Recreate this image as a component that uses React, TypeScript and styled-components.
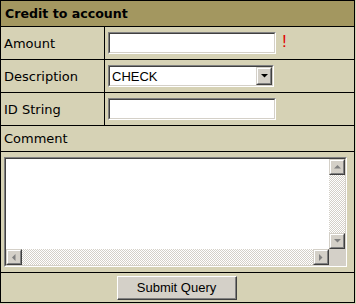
import * as React from "react";
import styled, { createGlobalStyle } from "styled-components";

const tan = "#d6d2b5";
const face = "#d4d0c8";

const GlobalStyle = createGlobalStyle`
  html, body {
    margin: 0;
    padding: 0;
    background: ${tan};
  }
  * {
    box-sizing: border-box;
  }
`;

const Panel = styled.form`
  width: 355px;
  height: 303px;
  border: 1px solid #000;
  background: ${tan};
  display: flex;
  flex-direction: column;
  font-family: "DejaVu Sans", Verdana, sans-serif;
  font-size: 13px;
  color: #000;
  margin: 0;
`;

const Header = styled.div`
  height: 26px;
  border-bottom: 1px solid #000;
  background: #a39760;
  display: flex;
  align-items: center;
  padding-left: 4px;
  font-weight: bold;
  font-size: 12.6px;
`;

const Row = styled.div<{ $height: number }>`
  display: grid;
  grid-template-columns: 104px 1fr;
  height: ${(p) => p.$height}px;
  border-bottom: 1px solid #000;
`;

const Label = styled.label`
  display: flex;
  align-items: center;
  padding-left: 3px;
  border-right: 1px solid #000;
`;

const Value = styled.div`
  display: flex;
  align-items: center;
  padding-left: 3px;
`;

const FullRow = styled.div<{ $height: number }>`
  height: ${(p) => p.$height}px;
  border-bottom: 1px solid #000;
  display: flex;
  align-items: center;
  padding-left: 3px;
`;

const AreaCell = styled.div`
  height: 121px;
  border-bottom: 1px solid #000;
  padding: 5px 0 0 3px;
`;

const ButtonRow = styled.div`
  flex: 1;
  display: flex;
  align-items: center;
  justify-content: center;
  padding-right: 2px;
`;

const InsetFrame = styled.div<{ $width: number; $height: number }>`
  border-style: solid;
  border-width: 1px;
  border-color: #808080 #fff #fff #808080;
  width: ${(p) => p.$width}px;
  height: ${(p) => p.$height}px;
  background: #fff;
`;

const InsetInner = styled.div`
  width: 100%;
  height: 100%;
  border-style: solid;
  border-width: 1px;
  border-color: #404040 ${face} ${face} #404040;
  display: flex;
  background: #fff;
`;

const TextInput = styled.input`
  border: 0;
  outline: none;
  width: 100%;
  height: 100%;
  padding: 0 2px;
  font-family: "Liberation Sans", Arial, sans-serif;
  font-size: 13px;
  background: #fff;
`;

const Required = styled.span`
  color: #e00000;
  font-family: "Liberation Sans", Arial, sans-serif;
  font-size: 17px;
  margin-left: 6px;
  margin-top: -3px;
`;

const NativeSelect = styled.select`
  appearance: none;
  border: 0;
  outline: none;
  flex: 1;
  min-width: 0;
  height: 100%;
  padding: 0 2px;
  font-family: "Liberation Sans", Arial, sans-serif;
  font-size: 13px;
  color: #000;
  background: #fff;
`;

const Raised = styled.div<{ $width: number; $height: number }>`
  width: ${(p) => p.$width}px;
  height: ${(p) => p.$height}px;
  flex: none;
  background: ${face};
  border-style: solid;
  border-width: 1px;
  border-color: ${face} #404040 #404040 ${face};
  display: flex;
`;

const RaisedInner = styled.div`
  flex: 1;
  border-style: solid;
  border-width: 1px;
  border-color: #fff #808080 #808080 #fff;
  display: flex;
  align-items: center;
  justify-content: center;
`;

const AreaGrid = styled.div`
  flex: 1;
  display: grid;
  grid-template-columns: 1fr 16px;
  grid-template-rows: 1fr 16px;
`;

const Area = styled.textarea`
  border: 0;
  outline: none;
  resize: none;
  overflow: hidden;
  padding: 2px;
  font-family: "Liberation Mono", "Courier New", monospace;
  font-size: 13px;
  background: #fff;
`;

const Track = styled.div<{ $vertical?: boolean }>`
  display: flex;
  flex-direction: ${(p) => (p.$vertical ? "column" : "row")};
  justify-content: space-between;
  background: repeating-conic-gradient(${face} 0 25%, #fff 0 50%) 0 0 / 2px 2px;
`;

const Corner = styled.div`
  background: ${face};
`;

const SubmitButton = styled.button`
  width: 120px;
  height: 24px;
  padding: 0;
  background: ${face};
  border-style: solid;
  border-width: 1px;
  border-color: #fff #404040 #404040 #fff;
  box-shadow: inset -1px -1px 0 #808080;
  font-family: "Liberation Sans", Arial, sans-serif;
  font-size: 13px;
  color: #000;
  cursor: pointer;
`;

type Dir = "up" | "down" | "left" | "right";

const arrowPoints: Record<Dir, string> = {
  up: "3.5,0 0,3.5 7,3.5",
  down: "0,0 7,0 3.5,3.5",
  left: "3.5,0 3.5,7 0,3.5",
  right: "0,0 0,7 3.5,3.5",
};

const Arrow: React.FC<{ dir: Dir; color?: string }> = ({ dir, color = "#808080" }) => {
  const vertical = dir === "up" || dir === "down";
  return (
    <svg width={vertical ? 7 : 4} height={vertical ? 4 : 7} viewBox={vertical ? "0 0 7 4" : "0 0 4 7"}>
      <polygon points={arrowPoints[dir]} fill={color} />
    </svg>
  );
};

const ScrollButton: React.FC<{ dir: Dir }> = ({ dir }) => (
  <Raised $width={16} $height={16}>
    <RaisedInner>
      <Arrow dir={dir} />
    </RaisedInner>
  </Raised>
);

export default function App() {
  return (
    <>
      <GlobalStyle />
      <Panel onSubmit={(e) => e.preventDefault()}>
        <Header>Credit to account</Header>

        <Row $height={33}>
          <Label>Amount</Label>
          <Value>
            <InsetFrame $width={168} $height={22}>
              <InsetInner>
                <TextInput name="amount" />
              </InsetInner>
            </InsetFrame>
            <Required>!</Required>
          </Value>
        </Row>

        <Row $height={33}>
          <Label>Description</Label>
          <Value>
            <InsetFrame $width={166} $height={22}>
              <InsetInner>
                <NativeSelect name="description" defaultValue="CHECK">
                  <option>CHECK</option>
                  <option>CASH</option>
                  <option>TRANSFER</option>
                </NativeSelect>
                <Raised $width={16} $height={18}>
                  <RaisedInner>
                    <Arrow dir="down" color="#000" />
                  </RaisedInner>
                </Raised>
              </InsetInner>
            </InsetFrame>
          </Value>
        </Row>

        <Row $height={33}>
          <Label>ID String</Label>
          <Value>
            <InsetFrame $width={168} $height={22}>
              <InsetInner>
                <TextInput name="idString" />
              </InsetInner>
            </InsetFrame>
          </Value>
        </Row>

        <FullRow $height={26}>Comment</FullRow>

        <AreaCell>
          <InsetFrame $width={343} $height={110}>
            <InsetInner>
              <AreaGrid>
                <Area name="comment" />
                <Track $vertical>
                  <ScrollButton dir="up" />
                  <ScrollButton dir="down" />
                </Track>
                <Track>
                  <ScrollButton dir="left" />
                  <ScrollButton dir="right" />
                </Track>
                <Corner />
              </AreaGrid>
            </InsetInner>
          </InsetFrame>
        </AreaCell>

        <ButtonRow>
          <SubmitButton type="submit">Submit Query</SubmitButton>
        </ButtonRow>
      </Panel>
    </>
  );
}
